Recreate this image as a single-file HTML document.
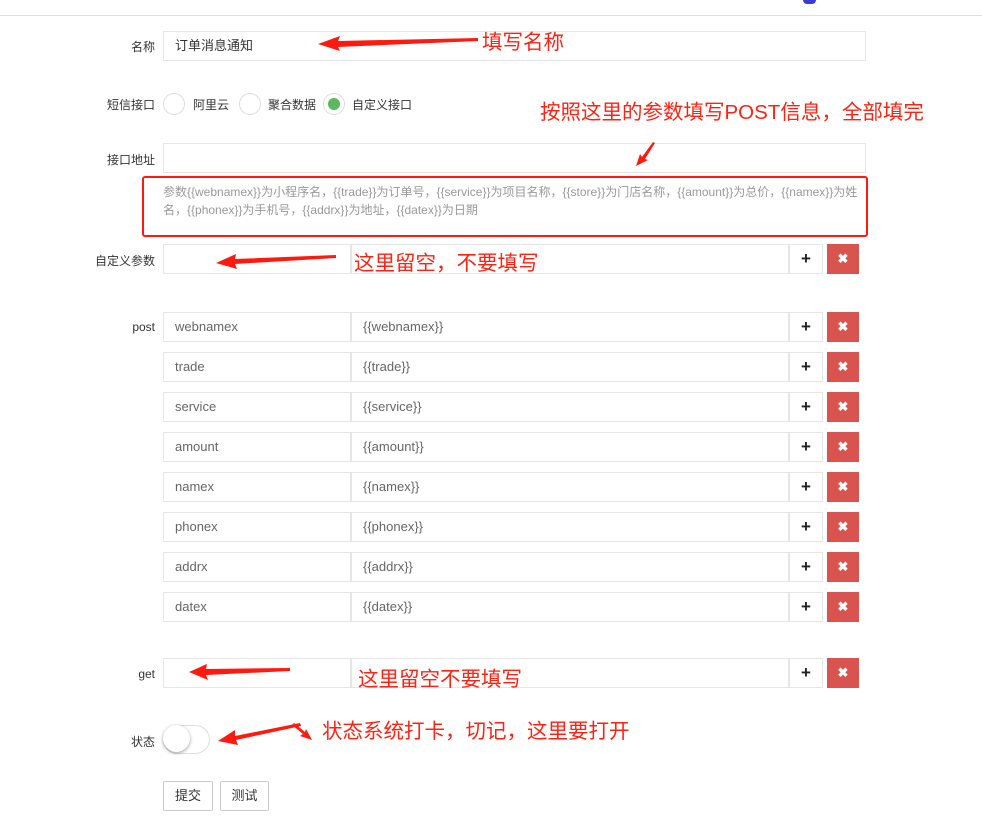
<!DOCTYPE html>
<html><head><meta charset="utf-8"><style>
body{margin:0;width:982px;height:826px;background:#fff;position:relative;overflow:hidden;font-family:"Liberation Sans","Noto Sans CJK SC",sans-serif;font-size:12px;color:#333}
.a{position:absolute}
.inp{position:absolute;border:1px solid #e5e6e7;background:#fff;box-sizing:border-box;height:30px;line-height:28px;padding-left:11px;font-size:13px;color:#666}
.lbl{position:absolute;text-align:right;width:155px;left:0;font-size:12px;color:#333}
.plus{position:absolute;left:789px;width:34px;height:30px;border:1px solid #e5e6e7;box-sizing:border-box;text-align:center;line-height:28px;font-size:17px;font-weight:bold;color:#222}
.x{position:absolute;left:827px;width:32px;height:30px;background:#d9534f;color:#fff;text-align:center;line-height:30px;font-size:13px;font-weight:bold}
.red{position:absolute;color:#ff2213;font-size:20.5px;white-space:nowrap}
.rad{position:absolute;width:22px;height:22px;border:1px solid #ddd;border-radius:50%;box-sizing:border-box;top:93px}
.btn{position:absolute;top:781px;height:30px;border:1px solid #ccc;border-radius:2px;box-sizing:border-box;line-height:28px;text-align:center;font-size:13px}
</style></head><body>
<div class="a" style="left:0;top:15px;width:982px;height:1px;background:#e0e0e0"></div>
<div class="a" style="left:803px;top:0;width:13px;height:4px;background:#3b3bd6;border-radius:0 0 7px 7px"></div>

<div class="lbl" style="top:38px">名称</div>
<div class="inp" style="left:163px;top:31px;width:703px;color:#333">订单消息通知</div>
<div class="red" style="left:482px;top:25px">填写名称</div>

<div class="lbl" style="top:96px">短信接口</div>
<div class="rad" style="left:163px"></div><div class="a" style="left:193px;top:96px">阿里云</div>
<div class="rad" style="left:239px"></div><div class="a" style="left:268px;top:96px">聚合数据</div>
<div class="rad" style="left:323px"></div><div class="a" style="left:328px;top:98px;width:12px;height:12px;border-radius:50%;background:#5cb85c"></div><div class="a" style="left:352px;top:96px">自定义接口</div>
<div class="red" style="left:540px;top:95px">按照这里的参数填写POST信息，全部填完</div>

<div class="lbl" style="top:151px">接口地址</div>
<div class="inp" style="left:163px;top:143px;width:703px"></div>
<div class="a" style="left:142px;top:176px;width:726px;height:61px;border:2px solid #ff1a10;border-radius:3px;box-sizing:border-box"></div>
<div class="a" style="left:163px;top:183px;width:698px;font-size:12px;color:#999;line-height:18px">参数{{webnamex}}为小程序名，{{trade}}为订单号，{{service}}为项目名称，{{store}}为门店名称，{{amount}}为总价，{{namex}}为姓名，{{phonex}}为手机号，{{addrx}}为地址，{{datex}}为日期</div>

<div class="lbl" style="top:252px">自定义参数</div>
<div class="inp" style="left:163px;top:244px;width:188px"></div>
<div class="inp" style="left:351px;top:244px;width:438px"></div>
<div class="plus" style="top:244px">+</div><div class="x" style="top:244px">✖</div>
<div class="red" style="left:354px;top:246px">这里留空，不要填写</div>

<div class="lbl" style="top:320px">post</div>
<div class="inp" style="left:163px;top:312px;width:188px">webnamex</div><div class="inp" style="left:351px;top:312px;width:438px">{{webnamex}}</div><div class="plus" style="top:312px">+</div><div class="x" style="top:312px">✖</div>
<div class="inp" style="left:163px;top:352px;width:188px">trade</div><div class="inp" style="left:351px;top:352px;width:438px">{{trade}}</div><div class="plus" style="top:352px">+</div><div class="x" style="top:352px">✖</div>
<div class="inp" style="left:163px;top:392px;width:188px">service</div><div class="inp" style="left:351px;top:392px;width:438px">{{service}}</div><div class="plus" style="top:392px">+</div><div class="x" style="top:392px">✖</div>
<div class="inp" style="left:163px;top:432px;width:188px">amount</div><div class="inp" style="left:351px;top:432px;width:438px">{{amount}}</div><div class="plus" style="top:432px">+</div><div class="x" style="top:432px">✖</div>
<div class="inp" style="left:163px;top:472px;width:188px">namex</div><div class="inp" style="left:351px;top:472px;width:438px">{{namex}}</div><div class="plus" style="top:472px">+</div><div class="x" style="top:472px">✖</div>
<div class="inp" style="left:163px;top:512px;width:188px">phonex</div><div class="inp" style="left:351px;top:512px;width:438px">{{phonex}}</div><div class="plus" style="top:512px">+</div><div class="x" style="top:512px">✖</div>
<div class="inp" style="left:163px;top:552px;width:188px">addrx</div><div class="inp" style="left:351px;top:552px;width:438px">{{addrx}}</div><div class="plus" style="top:552px">+</div><div class="x" style="top:552px">✖</div>
<div class="inp" style="left:163px;top:592px;width:188px">datex</div><div class="inp" style="left:351px;top:592px;width:438px">{{datex}}</div><div class="plus" style="top:592px">+</div><div class="x" style="top:592px">✖</div>

<div class="lbl" style="top:667px">get</div>
<div class="inp" style="left:163px;top:658px;width:188px"></div>
<div class="inp" style="left:351px;top:658px;width:438px"></div>
<div class="plus" style="top:658px">+</div><div class="x" style="top:658px">✖</div>
<div class="red" style="left:358px;top:662px">这里留空不要填写</div>

<div class="lbl" style="top:733px">状态</div>
<div class="a" style="left:163px;top:725px;width:47px;height:29px;border:1px solid #dfdfdf;border-radius:15px;box-sizing:border-box"></div>
<div class="a" style="left:163px;top:725px;width:27px;height:27px;border-radius:50%;background:#fff;box-shadow:0 1px 3px rgba(0,0,0,.4)"></div>
<div class="red" style="left:322px;top:714px">状态系统打卡，切记，这里要打开</div>

<div class="btn" style="left:163px;width:50px">提交</div>
<div class="btn" style="left:220px;width:49px">测试</div>

<svg class="a" style="left:0;top:0" width="982" height="826">
<g fill="#ff1a10">
<polygon points="318,44 340,36 338,41 478,38 478,41 338,47 340,51"/>
<polygon points="636,166 640,154 642,157 653,142 655,143 645,159 648,160"/>
<polygon points="216,263 236,254 235,259 336,255 336,258 235,264 237,269"/>
<polygon points="189,672 207,664 206,669 290,668 290,671 206,675 208,680"/>
<polygon points="218,741 235,730 235,736 300,723 301,726 236,740 238,745"/>
<polygon points="312,740 300,736 303,734 292,725 294,723 305,732 306,729"/>
</g>
</svg>
</body></html>
